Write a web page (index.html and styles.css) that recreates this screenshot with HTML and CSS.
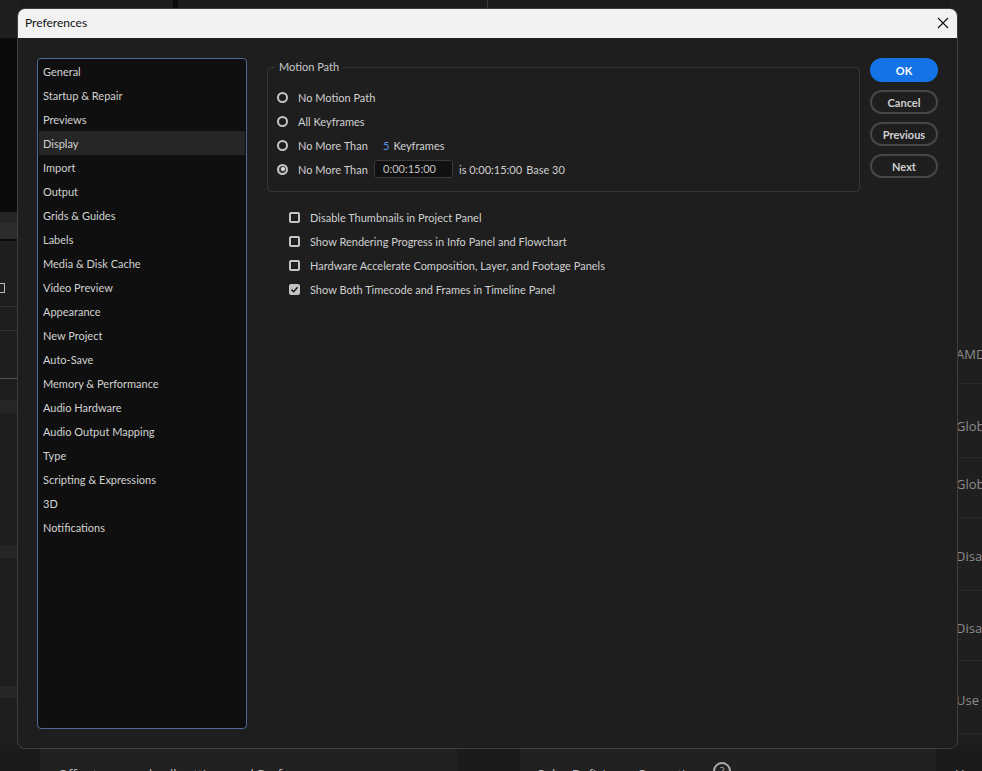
FILE: index.html
```html
<!DOCTYPE html>
<html>
<head>
<meta charset="utf-8">
<link rel="stylesheet" href="styles.css">
</head>
<body>
<div class="app">
  <div class="app-top">
    <div class="top-dark"></div>
    <div class="top-ticks">' ' ' ' '  ' ' '  ' '</div>
    <div class="top-line"></div>
  </div>
  <div class="app-left">
    <div class="band b1"></div>
    <div class="band b2"></div>
    <div class="band b3"></div>
    <div class="grid-icon"></div>
    <div class="band b4"></div>
    <div class="band b5"></div>
    <div class="band b6"></div>
    <div class="band b7"></div>
    <div class="band b8"></div>
    <div class="band b9"></div>
  </div>
  <div class="app-right">
    <div class="rrow" style="top:354px">AMD</div>
    <div class="rrow" style="top:426px">Glob</div>
    <div class="rrow" style="top:484px">Glob</div>
    <div class="rrow" style="top:556px">Disal</div>
    <div class="rrow" style="top:628px">Disal</div>
    <div class="rrow" style="top:700px">Use (</div>
    <div class="rline" style="top:383px"></div>
    <div class="rline" style="top:457px"></div>
    <div class="rline" style="top:517px"></div>
    <div class="rline" style="top:590px"></div>
    <div class="rline" style="top:660px"></div>
    <div class="rline" style="top:733px"></div>
  </div>
  <div class="app-bottom">
    <div class="bpanel bp1"><span class="btext">Offer to upgrade all settings and Preferences</span></div>
    <div class="bpanel bp2"><span class="btext">Color Deficiency Correction</span><span class="qmark">?</span></div>
    <div class="btext bt3">Use</div>
  </div>
</div>

<div class="dialog">
  <div class="titlebar">
    <span class="title">Preferences</span>
    <svg class="close" width="12" height="12" viewBox="0 0 12 12"><path d="M1 1L11 11M11 1L1 11" stroke="#111" stroke-width="1.1" fill="none"/></svg>
  </div>
  <div class="body">
    <div class="list">
      <div class="item">General</div>
      <div class="item">Startup &amp; Repair</div>
      <div class="item">Previews</div>
      <div class="item selected">Display</div>
      <div class="item">Import</div>
      <div class="item">Output</div>
      <div class="item">Grids &amp; Guides</div>
      <div class="item">Labels</div>
      <div class="item">Media &amp; Disk Cache</div>
      <div class="item">Video Preview</div>
      <div class="item">Appearance</div>
      <div class="item">New Project</div>
      <div class="item">Auto-Save</div>
      <div class="item">Memory &amp; Performance</div>
      <div class="item">Audio Hardware</div>
      <div class="item">Audio Output Mapping</div>
      <div class="item">Type</div>
      <div class="item">Scripting &amp; Expressions</div>
      <div class="item">3D</div>
      <div class="item">Notifications</div>
    </div>
    <div class="content">
      <div class="group">
        <div class="legend">Motion Path</div>
        <div class="row"><span class="radio"></span><span class="label">No Motion Path</span></div>
        <div class="row"><span class="radio"></span><span class="label">All Keyframes</span></div>
        <div class="row"><span class="radio"></span><span class="label fixed">No More Than</span><span class="scrub">5</span><span class="label">Keyframes</span></div>
        <div class="row"><span class="radio on"></span><span class="label fixed">No More Than</span><span class="field">0:00:15:00</span><span class="label is">is 0:00:15:00</span><span class="label base">Base 30</span></div>
      </div>
      <div class="checks">
        <div class="row"><span class="check"></span><span class="label">Disable Thumbnails in Project Panel</span></div>
        <div class="row"><span class="check"></span><span class="label">Show Rendering Progress in Info Panel and Flowchart</span></div>
        <div class="row"><span class="check"></span><span class="label">Hardware Accelerate Composition, Layer, and Footage Panels</span></div>
        <div class="row"><span class="check on"><svg width="9" height="9" viewBox="0 0 9 9"><path d="M1.5 4.6L3.6 6.7L7.6 2.2" stroke="#1e1e1e" stroke-width="1.6" fill="none"/></svg></span><span class="label">Show Both Timecode and Frames in Timeline Panel</span></div>
      </div>
    </div>
    <div class="buttons">
      <div class="btn primary">OK</div>
      <div class="btn">Cancel</div>
      <div class="btn">Previous</div>
      <div class="btn">Next</div>
    </div>
  </div>
</div>
</body>
</html>
```
FILE: styles.css
```css
* { box-sizing: border-box; }
html, body { margin: 0; padding: 0; }
body {
  width: 982px;
  height: 771px;
  overflow: hidden;
  background: #1c1c1c;
  font-family: Lato, "Open Sans", sans-serif;
  position: relative;
}
.app { position: absolute; inset: 0; }

.app-top { position: absolute; left: 0; top: 0; width: 982px; height: 10px; background: #1c1c1c; }
.top-dark { position: absolute; left: 173px; top: 0; width: 5px; height: 10px; background: #0b0b0b; }
.top-line { position: absolute; left: 487px; top: 0; width: 1px; height: 10px; background: #3a3a3a; }
.top-ticks { position: absolute; left: 222px; top: -6px; color: #bdbdbd; font-size: 10px; letter-spacing: 3px; }

.app-left { position: absolute; left: 0; top: 0; width: 20px; height: 771px; background: #1e1e1e; }
.band { position: absolute; left: 0; width: 20px; }
.b1 { top: 38px; height: 174px; background: #0b0b0b; }
.b2 { top: 212px; height: 11px; background: #262626; }
.b3 { top: 223px; height: 18px; background: #2c2c2c; border-bottom: 2px solid #0b0b0b; }
.grid-icon { position: absolute; left: 0; top: 283px; width: 5px; height: 10px; border: 1px solid #bbb; border-left: none; }
.b4 { top: 306px; height: 1px; background: #333; }
.b5 { top: 330px; height: 1px; background: #333; }
.b6 { top: 378px; height: 1px; background: #555; }
.b7 { top: 400px; height: 13px; background: #262626; }
.b8 { top: 545px; height: 13px; background: #262626; }
.b9 { top: 686px; height: 12px; background: #262626; }

.app-right { position: absolute; left: 950px; top: 0; width: 32px; height: 771px; background: #1f1f1f; }
.rrow { position: absolute; left: 6px; color: #8c8c8c; font-family: "Open Sans", sans-serif; font-size: 13px; line-height: 16px; margin-top: -8px; white-space: nowrap; }
.rline { position: absolute; left: 0; width: 32px; height: 1px; background: #2a2a2a; }

.app-bottom { position: absolute; left: 0; top: 745px; width: 982px; height: 26px; background: #1b1b1b; }
.bpanel { position: absolute; top: 0; height: 26px; background: #212121; }
.bp1 { left: 40px; width: 417px; }
.bp2 { left: 520px; width: 416px; }
.btext { position: absolute; top: 20px; left: 18px; color: #bdbdbd; font-family: "Open Sans", sans-serif; font-size: 13px; white-space: nowrap; }
.bp2 .btext { left: 16px; }
.qmark { position: absolute; left: 193px; top: 17px; width: 18px; height: 18px; border: 2px solid #aaa; border-radius: 50%; color: #aaa; font-size: 11px; text-align: center; line-height: 14px; font-family: "Open Sans", sans-serif; }
.bt3 { left: 955px; }

.dialog {
  position: absolute;
  left: 17px;
  top: 8px;
  width: 941px;
  height: 741px;
  border: 1px solid #3e3e3e;
  border-radius: 8px;
  overflow: hidden;
  background: #1e1e1e;
  display: flex;
  flex-direction: column;
}
.titlebar {
  height: 29px;
  flex: none;
  background: #f3f2f2;
  display: flex;
  align-items: center;
  justify-content: space-between;
  padding: 0 8px 2px 7px;
}
.title { font-family: Lato, sans-serif; font-size: 12px; color: #111; }

.body {
  flex: 1;
  display: flex;
  padding: 20px 19px 19px 19px;
}
.list {
  width: 210px;
  flex: none;
  border: 1px solid #4f6a98;
  border-radius: 4px;
  background: #0f0f0f;
  padding: 0 1px;
}
.item {
  height: 24px;
  line-height: 25px;
  padding-left: 4px;
  font-size: 11px;
  color: #d2d2d2;
}
.item.selected { background: #262626; }

.content { margin-left: 20px; width: 593px; flex: none; padding-top: 9px; }
.group {
  position: relative;
  border: 1px solid #363636;
  border-radius: 4px;
  padding: 17px 0 10px 9px;
}
.legend {
  position: absolute;
  left: 7px;
  top: -9px;
  padding: 0 4px;
  background: #1e1e1e;
  font-size: 11px;
  line-height: 15px;
  color: #c8c8c8;
}
.row { height: 24px; display: flex; align-items: center; }
.label { font-size: 11px; color: #d0d0d0; white-space: nowrap; }
.radio {
  width: 11px; height: 11px;
  border: 2px solid #c4c4c4;
  border-radius: 50%;
  margin-right: 10px;
  flex: none;
  position: relative;
}
.radio.on { background: #3a3a3a; }
.radio.on::after {
  content: "";
  position: absolute;
  left: 1.5px; top: 1.5px;
  width: 4px; height: 4px;
  border-radius: 50%;
  background: #e0e0e0;
}
.fixed { width: 76px; }
.scrub { font-size: 11px; color: #5b93e8; padding-left: 9px; margin-right: 4px; }
.field {
  width: 79px; height: 18px;
  border: 1px solid #3a3a3a;
  border-radius: 3px;
  background: #101010;
  font-size: 11px;
  color: #c4c4c4;
  line-height: 16px;
  padding-left: 8px;
}
.is { margin-left: 6px; }
.base { margin-left: 4px; }

.checks { padding: 13px 0 0 22px; }
.check {
  width: 11px; height: 11px;
  border: 2px solid #c4c4c4;
  border-radius: 2px;
  margin-right: 10px;
  flex: none;
  display: flex;
  align-items: center;
  justify-content: center;
}
.check.on { background: #c4c4c4; }
.check svg { flex: none; }

.buttons { margin-left: 10px; width: 68px; flex: none; display: flex; flex-direction: column; gap: 8px; }
.btn {
  height: 24px;
  border: 2px solid #474747;
  border-radius: 12px;
  display: flex;
  align-items: center;
  justify-content: center;
  font-size: 11px;
  font-weight: 700;
  color: #d0d0d0;
}
.btn.primary { background: #1473e6; border-color: #1473e6; color: #fff; }
```
